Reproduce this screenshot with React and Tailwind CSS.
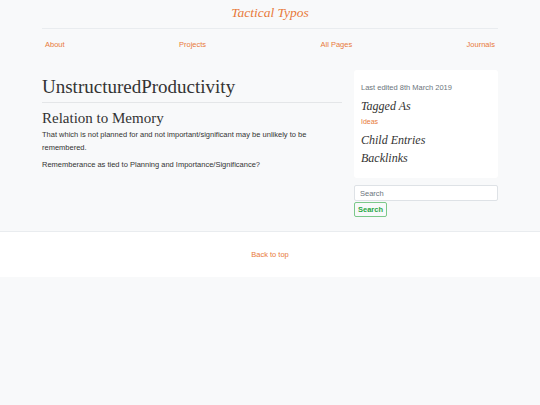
export default function App() {
  return (
    <div className="min-h-[405px] bg-[#f8f9fa] font-['Liberation_Sans',Arial,sans-serif] text-[#212529]">
      <div className="mx-auto w-[456px]">
        <div className="flex h-[29px] items-center justify-center border-b border-[#e9ecef] pb-[2px]">
          <a className="text-[13.5px] italic text-[#e8793a] font-['Liberation_Serif',serif]">Tactical Typos</a>
        </div>
        <nav className="flex justify-between px-[3px] pt-[11px] text-[7.5px] leading-[10px] text-[#e8793a]">
          <a>About</a>
          <a>Projects</a>
          <a>All Pages</a>
          <a>Journals</a>
        </nav>
        <div className="mt-[20px] flex items-start gap-[12px]">
          <main className="w-[300px]">
            <h1 className="mt-[4px] border-b border-[#e4e6e8] pb-[2px] text-[19px] leading-[26px] text-[#333] font-['Liberation_Serif',serif]">UnstructuredProductivity</h1>
            <h2 className="mt-[5px] text-[15px] leading-[20px] text-[#333] font-['Liberation_Serif',serif]">Relation to Memory</h2>
            <p className="text-[7.5px] leading-[13px] text-[#333]">That which is not planned for and not important/significant may be unlikely to be remembered.</p>
            <p className="mt-[4px] text-[7.5px] leading-[13px] text-[#333]">Rememberance as tied to Planning and Importance/Significance?</p>
          </main>
          <aside className="w-[144px]">
            <div className="rounded-[3px] bg-white px-[7px] pb-[13px] pt-[13px]">
              <p className="text-[7.5px] leading-[10px] text-[#6c757d]">Last edited 8th March 2019</p>
              <h4 className="mt-[6px] text-[12px] italic leading-[14px] text-[#333] font-['Liberation_Serif',serif]">Tagged As</h4>
              <a className="mt-[4px] block text-[7px] leading-[10px] text-[#e8793a]">Ideas</a>
              <h4 className="mt-[6px] text-[12px] italic leading-[14px] text-[#333] font-['Liberation_Serif',serif]">Child Entries</h4>
              <h4 className="mt-[4px] text-[12px] italic leading-[14px] text-[#333] font-['Liberation_Serif',serif]">Backlinks</h4>
            </div>
            <input className="mt-[7px] block h-[16px] w-full rounded-[2px] border border-[#dee2e6] bg-white px-[5px] text-[7.5px] text-[#495057] placeholder:text-[#6c757d] outline-none" placeholder="Search" />
            <button className="mt-[1px] block h-[15px] w-[33px] rounded-[2px] border border-[#7cc88a] text-[7.5px] font-bold text-[#28a745]">Search</button>
          </aside>
        </div>
      </div>
      <footer className="mt-[14px] flex h-[46px] items-center justify-center border-t border-[#e9ecef] bg-white text-[7.5px] text-[#e8793a]">
        <a>Back to top</a>
      </footer>
    </div>
  );
}
